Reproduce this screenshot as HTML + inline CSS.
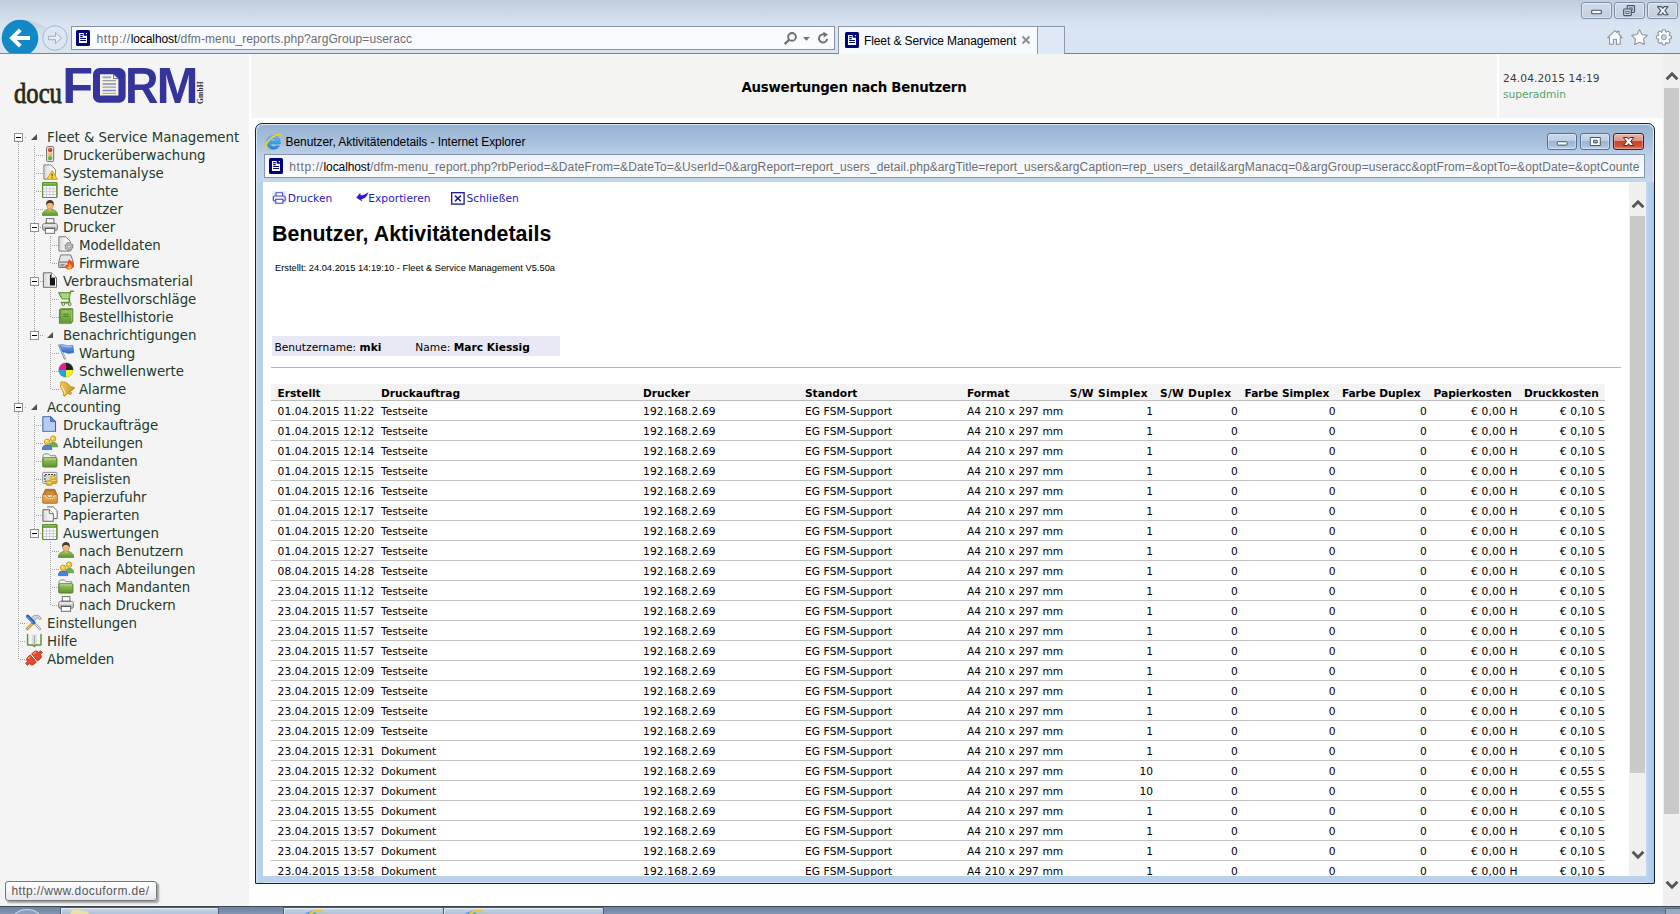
<!DOCTYPE html>
<html lang="de">
<head>
<meta charset="utf-8">
<title>Fleet &amp; Service Management</title>
<style>
html,body{margin:0;padding:0;}
body{width:1680px;height:914px;overflow:hidden;position:relative;background:#fff;font-family:"DejaVu Sans","Liberation Sans",sans-serif;}
.abs{position:absolute;}
.ui{font-family:"Liberation Sans","DejaVu Sans",sans-serif;font-size:12px;white-space:nowrap;}
/* ---------- browser chrome ---------- */
#chrome{left:0;top:0;width:1680px;height:53px;background:linear-gradient(#c0cddc 0px,#cad6e4 10px,#d6e2ef 22px,#d9e5f2 30px,#d8e4f1 53px);border-bottom:1px solid #71869c;}
#addr{left:71px;top:26px;width:762px;height:22px;border:1px solid #8795a6;background:#f9fbfe;box-sizing:content-box;}
#tab{left:838px;top:26px;width:198px;height:27px;border:1px solid #8a98aa;border-bottom:none;background:#f6f9fd;}
#newtab{left:1038px;top:26px;width:26px;height:27px;border:1px solid #8a98aa;border-left:none;border-bottom:none;background:#dfe9f6;}
.wbtn{top:2px;width:29px;height:15px;border:1px solid #7f90a6;border-radius:3px;background:linear-gradient(#cfdbe9,#c0cfe1);box-shadow:inset 0 0 0 1px rgba(255,255,255,.45);}
/* ---------- page ---------- */
#left{left:0;top:54px;width:249px;height:852px;background:#f4f4f4;}
#hdr{left:251px;top:54px;width:1246px;height:64px;background:#f4f4f3;}
#right{left:1499px;top:54px;width:164px;height:64px;background:#f4f4f4;}
#vscroll{left:1663px;top:54px;width:17px;height:852px;background:#f0f0f0;}
.tree{font-size:13.33px;color:#223a2c;white-space:nowrap;line-height:18px;}
/* ---------- popup ---------- */
#popup{left:255px;top:123px;width:1398px;height:759px;border:1px solid #16232f;border-radius:7px 7px 1px 1px;background:#b9d1ea;box-shadow:inset 0 0 0 1px #d8e6f5;}
#ptitle{left:1px;top:1px;width:1396px;height:57px;border-radius:6px 6px 0 0;background:linear-gradient(#98b3d2 0px,#a3bcd9 12px,#b7cce5 27px,#bfd3ea 32px,#c4d7ec 57px);}
#paddr{left:264px;top:154px;width:1379px;height:22px;border:1px solid #8496ad;background:linear-gradient(#eef3fa,#fbfcfe);}
#pcontent{left:263px;top:182px;width:1383px;height:694px;background:#fff;overflow:hidden;}
.rep{font-size:10.67px;color:#000;white-space:nowrap;}
.row{position:absolute;left:8px;width:1334px;height:19px;border-bottom:1px solid #c2c2c2;line-height:19px;}
.row span{position:absolute;top:1px;}
.r{text-align:right;}
.lnk{color:#2620c4;letter-spacing:.05px;line-height:14px;}
#h1{font-family:"Liberation Sans",sans-serif;font-weight:700;font-size:21.33px;line-height:26px;color:#000;letter-spacing:.06px;}
#sub{font-family:"Liberation Sans",sans-serif;font-size:9.33px;line-height:12px;color:#000;}
#ubox{background:#e8e9f4;}
.ut{line-height:20px;}
.hrow{position:absolute;left:8px;top:202px;width:1334px;height:17px;line-height:17px;font-weight:700;}
.hrow span{position:absolute;top:1px;letter-spacing:-0.06px;}
.c1{left:6.500px;letter-spacing:.11px}.c2{left:110px}.c3{left:372px;letter-spacing:.13px}.c4{left:534px;letter-spacing:.08px}.c5{left:696px;letter-spacing:.06px}
.c6{right:452px}.c7{right:367.200px}.c8{right:269.500px}.c9{right:178.300px}.c10{right:87.400px;letter-spacing:.15px}.c11{right:0px;letter-spacing:.15px}
.h6{left:798.700px;letter-spacing:.3px !important}.h7{left:889px;letter-spacing:.25px !important}.h8{left:973.600px}.h9{left:1070.900px}.h10{left:1162.600px}.h11{left:1253px}
.tl{position:absolute;height:18px;line-height:20px;letter-spacing:-0.04px;}
.ic{position:absolute;overflow:visible;}
.ex{position:absolute;width:7px;height:7px;border:1px solid #8f8f8f;background:#fff;}
.ex:after{content:"";position:absolute;left:1px;top:3px;width:5px;height:1px;background:#000;}
.tri{position:absolute;width:0;height:0;border-left:6px solid transparent;border-bottom:6px solid #505050;}
.dv{position:absolute;width:1px;background:repeating-linear-gradient(to bottom,#a2a2a2 0 1px,transparent 1px 2px);}
.dh{position:absolute;height:1px;background:repeating-linear-gradient(to right,#a2a2a2 0 1px,transparent 1px 2px);}
#ttl{font-size:13.33px;font-weight:700;letter-spacing:-0.25px;line-height:16px;color:#000;white-space:nowrap;}
.dt{font-size:10.67px;line-height:14px;white-space:nowrap;letter-spacing:.1px;}
#url1{letter-spacing:.1px}
#tabt{letter-spacing:-.1px}
#pfr{left:1390px;top:58px;width:8px;height:701px;background:linear-gradient(to right,#c6daf0 0px,#b6d1eb 2px,#b0cdea 6px,#9fc3e8 8px);}
#pfl{left:0px;top:58px;width:7px;height:701px;background:linear-gradient(to right,#d6e4f4 0px,#bdd3ec 2px,#b4cde9 7px);}
.pbtn{top:133px;width:28px;height:15px;border:1px solid #566f92;border-radius:3px;background:linear-gradient(#c9d9ec 0%,#bccfe6 45%,#9db6d4 50%,#a6bfdc 80%,#c3daf0 100%);box-shadow:inset 0 0 0 1px rgba(255,255,255,.35);}
.pclose{width:29px;border-color:#4d1c16;background:linear-gradient(#ecb7ab 0%,#dd907f 45%,#c9452c 50%,#cc4f36 78%,#e27f68 100%);box-shadow:inset 0 0 0 1px rgba(255,255,255,.3);}
#url2{letter-spacing:.1px}
#ptt{letter-spacing:-.06px}
#pscroll{left:1366px;top:0;width:17px;height:694px;background:#f0f0f0;}
#tip{left:5px;top:881px;width:150px;height:18px;border:1px solid #767676;border-radius:3px;background:linear-gradient(#ffffff,#e6e7f1);box-shadow:2px 2px 2px rgba(0,0,0,.35);color:#575757;line-height:18px;text-indent:5.500px;letter-spacing:.4px}
.tbi{top:0;height:8px;border:1px solid #4d5c72;border-bottom:none;border-radius:2px 2px 0 0;background:linear-gradient(#c9d6e5,#a9bbd2);box-shadow:inset 1px 1px 0 rgba(255,255,255,.55);}
.hp{letter-spacing:.6px}.lh{color:#000;letter-spacing:-.1px}
#logo span{white-space:nowrap;line-height:1;}
.lg-docu{font-family:"Liberation Serif",serif;font-size:29px;color:#2b2b12;transform-origin:0 0;transform:scaleX(.85);-webkit-text-stroke:.8px #2b2b12;}
.lg-F,.lg-O,.lg-R,.lg-M{font-family:"Liberation Sans",sans-serif;font-weight:700;font-size:50.500px;color:#34349b;transform-origin:0 0;}
.lg-F{transform:scaleX(1)}.lg-O{font-size:44px !important;transform:scaleX(.82)}.lg-R{transform:scaleX(.92)}.lg-M{transform:scaleX(1)}
.lg-gmbh{font-family:"Liberation Serif",serif;font-weight:700;font-size:7.500px;color:#2a2a2a;transform-origin:0 0;transform:rotate(-90deg);letter-spacing:.2px}
#taskbar{left:0;top:906px;width:1680px;height:8px;background:#7a8fac;border-top:1px solid #3c4756;box-sizing:border-box;overflow:hidden;}
</style>
</head>
<body>
<svg width="0" height="0" style="position:absolute">
<defs>
<g id="i-iepage">
 <rect x="0" y="0" width="14" height="16" rx="1.600" fill="#04047a"/>
 <path d="M3 3 H7.700 V5.700 H11 V13 H3 Z" fill="#fff"/>
 <path d="M9.500 3 H11 V4.800 Z" fill="#fff"/>
 <path d="M4.200 4.600 H6.800 M4.200 6.600 H6.800 M4.200 8.500 H10 M4.200 10.500 H10" stroke="#04047a" stroke-width="1.100"/>
</g>
<linearGradient id="gGreen" x1="0" y1="0" x2="0" y2="1"><stop offset="0" stop-color="#9ccb5c"/><stop offset="1" stop-color="#5f9230"/></linearGradient>
<linearGradient id="gGreenH" x1="0" y1="0" x2="1" y2="0"><stop offset="0" stop-color="#6b9a34"/><stop offset=".5" stop-color="#93c455"/><stop offset="1" stop-color="#679530"/></linearGradient>
<linearGradient id="gGray" x1="0" y1="0" x2="0" y2="1"><stop offset="0" stop-color="#efefef"/><stop offset="1" stop-color="#a9a9a9"/></linearGradient>
<linearGradient id="gPage" x1="0" y1="0" x2="1" y2="0"><stop offset="0" stop-color="#d9d9dc"/><stop offset=".6" stop-color="#f4f4f6"/><stop offset="1" stop-color="#ffffff"/></linearGradient>
<linearGradient id="gBlue" x1="0" y1="0" x2="0" y2="1"><stop offset="0" stop-color="#7fb0ee"/><stop offset="1" stop-color="#2f63c0"/></linearGradient>
<linearGradient id="gGold" x1="0" y1="0" x2="1" y2="1"><stop offset="0" stop-color="#f6e07a"/><stop offset="1" stop-color="#c8901c"/></linearGradient>
<linearGradient id="gOr" x1="0" y1="0" x2="0" y2="1"><stop offset="0" stop-color="#f0b865"/><stop offset="1" stop-color="#d08a32"/></linearGradient>
<g id="i-traffic">
 <rect x="4.5" y=".5" width="7.2" height="15" rx="1.2" fill="#dcdcdc" stroke="#777" stroke-width="1"/>
 <circle cx="8.1" cy="4" r="2.1" fill="#d8242c"/><circle cx="7.7" cy="3.4" r=".7" fill="#f08a8a"/>
 <circle cx="8.1" cy="8.1" r="1.9" fill="#f3c030"/><circle cx="7.8" cy="7.6" r=".6" fill="#fbe89a"/>
 <circle cx="8.1" cy="12.1" r="2.1" fill="#5da62c"/><circle cx="7.7" cy="11.5" r=".7" fill="#a8dc7a"/>
</g>
<g id="i-pagewarn">
 <path d="M1.9 .9 H8.8 L13.4 5.4 V15.1 H1.9 Z" fill="url(#gPage)" stroke="#848484" stroke-width="1" stroke-linejoin="round"/>
 <path d="M10 6.6 L15.3 15.2 H4.9 Z" fill="#f9d648" stroke="#d9a21c" stroke-width="1" stroke-linejoin="round"/>
 <path d="M10.1 9.6 V12.4 M10.1 13.3 V14.3" stroke="#6b4a08" stroke-width="1.2"/>
</g>
<g id="i-table">
 <rect x=".6" y=".6" width="14.3" height="14.9" rx="1" fill="#fff" stroke="#5f8f2f" stroke-width="1.1"/>
 <rect x=".6" y=".6" width="14.3" height="3.4" fill="#74ab3d"/>
 <path d="M1.3 1.5 H14.2" stroke="#a4d26c" stroke-width=".9"/>
 <path d="M4.4 4.2 V15 M7.8 4.2 V15 M11.2 4.2 V15 M1.2 6.9 H14.3 M1.2 9.7 H14.3 M1.2 12.5 H14.3" stroke="#c9cadb" stroke-width="1"/>
 <rect x=".6" y=".6" width="14.3" height="14.9" rx="1" fill="none" stroke="#5f8f2f" stroke-width="1.1"/>
</g>
<g id="i-user">
 <path d="M.4 15.4 C.2 11.6 3.4 9.3 8 9.3 C12.6 9.3 15.8 11.6 15.6 15.4 Z" fill="url(#gGreen)" stroke="#5a8a2c" stroke-width=".8"/>
 <path d="M6 9.4 L8 11.2 L10 9.4 L9.4 8 H6.6 Z" fill="#e8b070"/>
 <ellipse cx="8" cy="5.6" rx="3.3" ry="3.7" fill="#f2bb7c" stroke="#b98548" stroke-width=".6"/>
 <path d="M4.1 5.4 C3.6 1.2 6.4 .1 8 .1 C9.6 .1 12.4 1.2 11.9 5.4 C11 3.6 9.6 3 8 3 C6.4 3 5 3.600 4.1 5.400 Z" fill="#4b3a30"/>
</g>
<g id="i-printer">
 <rect x="4.3" y=".6" width="7.6" height="5.2" fill="#fff" stroke="#6f6f6f" stroke-width="1"/>
 <path d="M3 4.600 H13 V6 H3 Z" fill="#5a5a5a"/>
 <rect x=".6" y="5.700" width="14.8" height="6.600" rx="1.6" fill="url(#gGray)" stroke="#7a7a7a" stroke-width="1"/>
 <path d="M1.4 7 H14.600" stroke="#fff" stroke-width=".9" opacity=".8"/>
 <rect x="3.400" y="10.400" width="9.200" height="4.900" fill="#fff" stroke="#6f6f6f" stroke-width="1"/>
 <path d="M3 10.300 H13" stroke="#555" stroke-width="1.1"/>
</g>
<g id="i-pagegear">
 <path d="M.9 .7 H7.600 L12.300 5.200 V15.100 H.9 Z" fill="url(#gPage)" stroke="#7c7c7c" stroke-width="1" stroke-linejoin="round"/>
 <circle cx="11" cy="10.600" r="3.700" fill="#c9c9c9" stroke="#8a8a8a" stroke-width="1.700" stroke-dasharray="1.900 1"/>
 <circle cx="11" cy="10.600" r="3.100" fill="#c4c4c4" stroke="#9a9a9a" stroke-width=".7"/>
 <circle cx="11" cy="10.600" r="1.400" fill="#f6f6f6" stroke="#8a8a8a" stroke-width=".8"/>
</g>
<g id="i-drivefire">
 <path d="M2.800 .9 H12.800 L15.300 8.200 H.6 Z" fill="#e6e6e6" stroke="#777" stroke-width="1" stroke-linejoin="round"/>
 <rect x=".6" y="8.200" width="14.700" height="5.300" rx=".8" fill="url(#gGray)" stroke="#777" stroke-width="1"/>
 <path d="M2.600 10.900 H6.400" stroke="#888" stroke-width="1.400"/>
 <path d="M11.200 5.300 C12.600 7.200 14.600 7.400 15.300 9.600 C16.600 12.600 14.300 15.600 11.200 15.500 C8 15.600 6.600 12.700 8.300 10.200 C8.800 11.300 9.400 11.400 9.700 11.100 C9.100 9 10 6.800 11.200 5.300 Z" fill="#ee4a1c"/>
 <path d="M11.300 9 C12.400 10.400 13.800 11.200 13.600 13 C13.400 14.600 12.300 15.100 11.200 15.100 C9.900 15.100 8.900 14.200 9.300 12.600 C9.900 13.200 10.500 13 10.700 12.600 C10.500 11.300 10.800 10 11.300 9 Z" fill="#fbb22c"/>
</g>
<g id="i-toner">
 <path d="M1.400 .8 H9.400 L14.500 5.700 V15.300 H1.400 Z" fill="url(#gPage)" stroke="#6d6d6d" stroke-width="1" stroke-linejoin="round"/>
 <path d="M7.900 2.800 H9 L9 5.900 H13 V13.600 H7.900 Z" fill="#151515"/>
 <path d="M9.400 .8 V5.700 H14.500" fill="#fff" stroke="#6d6d6d" stroke-width=".9" stroke-linejoin="round"/>
</g>
<g id="i-cart">
 <path d="M.6 2.700 H12.300 L11.400 8.900 H3.900 Z" fill="#84b84c" stroke="#5b8a2e" stroke-width="1" stroke-linejoin="round"/>
 <path d="M2 4.300 H11.800 M2.800 5.900 H11.600 M3.500 7.500 H11.300 M4.500 3 L5.500 8.700 M7 3 L7.400 8.700 M9.500 3 L9.300 8.700" stroke="#cfe8ae" stroke-width=".6"/>
 <path d="M12.100 3 L13 1.200 H15.400" fill="none" stroke="#5b8a2e" stroke-width="1.500" stroke-linecap="round"/>
 <path d="M11.400 8.900 V12.600 H3.300" fill="none" stroke="#5b8a2e" stroke-width="1.600" stroke-linecap="round"/>
 <circle cx="5.300" cy="14" r="1.500" fill="#dcecc6" stroke="#5b8a2e" stroke-width="1"/>
 <circle cx="11.600" cy="14" r="1.500" fill="#dcecc6" stroke="#5b8a2e" stroke-width="1"/>
</g>
<g id="i-book">
 <path d="M2.600 .7 H14.800 V13.300 L13.300 15.300 H1.400 V2 Z" fill="#5f9230" stroke="#4f7d26" stroke-width=".8" stroke-linejoin="round"/>
 <rect x="2.300" y="2.300" width="10.600" height="12.400" fill="url(#gGreenH)"/>
 <rect x="3.300" y="2.300" width="9.600" height="12.400" fill="url(#gGreen)" opacity=".85"/>
 <path d="M5.200 6.200 H10.600 M5.200 8.300 H10.600" stroke="#4f7d26" stroke-width="1"/>
 <path d="M13.700 1.600 V13.400" stroke="#b4dc80" stroke-width=".8"/>
</g>
<g id="i-flag">
 <path d="M1.300 1.300 L6.800 14.600" stroke="#7b8ba4" stroke-width="2.200" stroke-linecap="round"/>
 <path d="M1.700 1.700 L6.800 14.300" stroke="#dfe6f1" stroke-width=".8" stroke-linecap="round"/>
 <path d="M2 1.200 C5 -.4 7.400 1.900 10 1.900 C12 1.900 13.600 1.300 14.800 1.500 L15.700 8.800 C13.600 8.400 12.500 9.500 10.500 9.300 C8 9.100 6.900 7.600 4.700 8.100 Z" fill="url(#gBlue)" stroke="#3868bd" stroke-width=".7" stroke-linejoin="round"/>
 <path d="M3.100 1.900 C5.400 .9 7.400 2.900 10 2.900 C11.600 2.900 13 2.400 14.100 2.400" fill="none" stroke="#b8d4f8" stroke-width=".9"/>
</g>
<g id="i-cmyk">
 <path d="M8 8 V.7 A7.300 7.300 0 0 0 .7 8 Z" fill="#e91f8f"/>
 <path d="M8 8 H15.300 A7.300 7.300 0 0 0 8 .7 Z" fill="#242424"/>
 <path d="M8 8 H.7 A7.300 7.300 0 0 0 8 15.300 Z" fill="#1ea3e4"/>
 <path d="M8 8 V15.300 A7.300 7.300 0 0 0 15.300 8 Z" fill="#f9f11c"/>
 <circle cx="8" cy="8" r="7.300" fill="none" stroke="#555" stroke-opacity=".35" stroke-width=".7"/>
</g>
<g id="i-bell">
 <g transform="rotate(-38 8 8)">
  <path d="M8 .2 C9 .2 9.500 .9 9.300 1.700 C11.600 2.500 12.200 4.900 12.400 7.800 C12.600 10.400 13.600 11.400 14.700 12.400 V13.400 H1.300 V12.400 C2.400 11.400 3.400 10.400 3.600 7.800 C3.800 4.900 4.400 2.500 6.700 1.700 C6.500 .9 7 .2 8 .2 Z" fill="url(#gGold)" stroke="#b98a1a" stroke-width=".8" stroke-linejoin="round"/>
  <path d="M5.400 4.200 C5 6.400 5.300 9.400 3.800 11.800" fill="none" stroke="#fdf0a8" stroke-width="1.100" stroke-linecap="round"/>
  <circle cx="8" cy="14.500" r="1.500" fill="#e8b638" stroke="#b98a1a" stroke-width=".7"/>
 </g>
</g>
<g id="i-pageblue">
 <path d="M.9 .8 H8.600 L13.500 5.600 V15.300 H.9 Z" fill="#c3d8f6" stroke="#3b5ea6" stroke-width="1.100" stroke-linejoin="round"/>
 <path d="M1.800 1.700 H8 V6.300 H12.600 V14.400 H1.800 Z" fill="#b4cef3"/>
 <path d="M8.600 .8 V5.600 H13.500 Z" fill="#5e86cf" stroke="#3b5ea6" stroke-width=".8" stroke-linejoin="round"/>
</g>
<g id="i-group">
 <path d="M7.400 12.800 C7.300 9.500 9 8.400 11.200 8.400 C13.400 8.400 15.700 9.500 15.600 12.800 Z" fill="#79ad44" stroke="#588a2c" stroke-width=".7"/>
 <circle cx="11.100" cy="4.700" r="2.700" fill="#f7cf3c" stroke="#c58e12" stroke-width=".9"/>
 <circle cx="10.400" cy="3.900" r="1" fill="#fdeea0"/>
 <path d="M.4 15.600 C.2 12.300 2 11.100 5.100 11.100 C8.200 11.100 10 12.300 9.800 15.600 Z" fill="#4b83d6" stroke="#2f5fb0" stroke-width=".7"/>
 <circle cx="5.100" cy="7.800" r="2.700" fill="#f7cf3c" stroke="#c58e12" stroke-width=".9"/>
 <circle cx="4.400" cy="6.800" r="1" fill="#fdeea0"/>
</g>
<g id="i-folder">
 <path d="M.9 14.600 V3.600 L2.400 1.900 H6.600 L8.200 3.700 H13.800 V6 H.9" fill="#f1f1f1" stroke="#8d8d8d" stroke-width="1" stroke-linejoin="round"/>
 <rect x=".9" y="5.900" width="14" height="9.100" rx=".8" fill="url(#gGreen)" stroke="#567f2c" stroke-width="1"/>
 <path d="M1.800 6.900 H14" stroke="#c3e39a" stroke-width=".9"/>
</g>
<g id="i-money">
 <rect x=".7" y="2.400" width="14.200" height="11" rx=".8" fill="#f3f3f3" stroke="#8a8a8a" stroke-width="1"/>
 <rect x="2.900" y="4.500" width="9.900" height="6.800" fill="#d9d9dc" stroke="#3c3c3c" stroke-width="1.100" stroke-dasharray="2 1.100"/>
 <ellipse cx="11.500" cy="11.800" rx="3.100" ry="1.500" fill="#e8b72e" stroke="#b98a1a" stroke-width=".7"/>
 <ellipse cx="11.500" cy="10.300" rx="3.100" ry="1.500" fill="#f5d55a" stroke="#b98a1a" stroke-width=".7"/>
 <ellipse cx="10.700" cy="7.600" rx="3.100" ry="1.500" fill="#f5d55a" stroke="#b98a1a" stroke-width=".7"/>
 <ellipse cx="7.200" cy="14" rx="3.300" ry="1.600" fill="#e8b72e" stroke="#b98a1a" stroke-width=".7"/>
 <ellipse cx="7.200" cy="12.500" rx="3.300" ry="1.600" fill="#f7dc66" stroke="#b98a1a" stroke-width=".7"/>
</g>
<g id="i-inbox">
 <path d="M3.400 1.300 H12.700 L15 6.800 H1 Z" fill="#b9772d" stroke="#a5641f" stroke-width=".8" stroke-linejoin="round"/>
 <path d="M4.400 3.400 H11.700 L13 6.800 H3 Z" fill="#cf8e3f"/>
 <path d="M.7 6.800 H4.600 L6 9.300 H10.100 L11.500 6.800 H15.400 V14.300 C15.400 14.900 15 15.300 14.400 15.300 H1.700 C1.100 15.300 .7 14.900 .7 14.300 Z" fill="url(#gOr)" stroke="#b36f22" stroke-width=".9" stroke-linejoin="round"/>
 <path d="M1.600 7.800 H4.100 L5.500 10.300 H10.600 L12 7.800 H14.500" fill="none" stroke="#f9dca4" stroke-width=".8"/>
</g>
<g id="i-pages">
 <path d="M5 .9 H11.200 L15.200 4.800 V12.600 H11.500" fill="#fff" stroke="#666" stroke-width="1" stroke-linejoin="round"/>
 <path d="M.9 3.700 H7.300 L11.300 7.600 V15.300 H.9 Z" fill="url(#gPage)" stroke="#666" stroke-width="1" stroke-linejoin="round"/>
 <path d="M7.300 3.700 V7.600 H11.300" fill="#fff" stroke="#666" stroke-width=".9" stroke-linejoin="round"/>
</g>
<g id="i-tools">
 <path d="M5.200 4.800 C6 2.200 9 .8 11.600 1.400 C13.300 1.800 14.600 3 15.400 4.800 L13.300 5.600 C12.900 4.600 12 3.900 10.800 3.800 L8.600 6.600 Z" fill="#d6d6d6" stroke="#8c8c8c" stroke-width=".8" stroke-linejoin="round"/>
 <path d="M1.300 14.800 L6.800 9.300" stroke="#b9892e" stroke-width="2.800" stroke-linecap="round"/>
 <path d="M1.500 14.400 L6.600 9.300" stroke="#f1d27e" stroke-width="1.100" stroke-linecap="round"/>
 <path d="M8.200 9.200 L13.900 14.900" stroke="#9a9a9a" stroke-width="2.200" stroke-linecap="round"/>
 <path d="M8.300 9.300 L13.700 14.700" stroke="#fafafa" stroke-width="1" stroke-linecap="round"/>
 <path d="M1.600 2.200 L7.800 8.600" stroke="#2c62c6" stroke-width="3.400" stroke-linecap="round"/>
 <path d="M1.300 2.900 L6.800 8.600" stroke="#7fb0f2" stroke-width="1" stroke-linecap="round"/>
</g>
<g id="i-help">
 <path d="M2.400 2.300 H7.300 L8.300 3.200 L9.300 2.300 H14 V12.600 H9.300 L8.300 13.400 L7.300 12.600 H2.400 Z" fill="#f6f6f6"/>
 <path d="M8.300 3.200 V13.200" stroke="#a9a9a9" stroke-width="1.600"/>
 <path d="M5.600 2.300 H7.400 V12.600 H5.600 Z M9.200 2.300 H10.800 V12.600 H9.200 Z" fill="#dedede"/>
 <path d="M1.600 2.600 V13.100 H6.800 L8.300 14.500 L9.800 13.100 H15 V2.600" fill="none" stroke="#6a9332" stroke-width="1.500" stroke-linejoin="round" stroke-linecap="round"/>
</g>
<g id="i-logout">
 <g transform="rotate(-40 8 8)">
  <path d="M-1.800 6.700 H.8 V6.400 C.8 4.400 2.300 3.300 4.200 3.300 H7.100 V12.700 H4.200 C2.300 12.700 .8 11.600 .8 9.600 V9.300 H-1.800 Z" fill="#e5492d" stroke="#b52b16" stroke-width=".8" stroke-linejoin="round"/>
  <path d="M17.800 6.700 H15.200 V6.400 C15.200 4.400 13.700 3.300 11.800 3.300 H8.900 V12.700 H11.800 C13.700 12.700 15.200 11.600 15.200 9.600 V9.300 H17.800 Z" fill="#e5492d" stroke="#b52b16" stroke-width=".8" stroke-linejoin="round"/>
  <path d="M2.600 4.700 H6 M10 4.700 H13.400" stroke="#f6a58f" stroke-width="1.100"/>
 </g>
</g>

</defs>
</svg>
<!-- browser chrome -->
<div id="chrome" class="abs"></div>
<!-- back / forward -->
<svg class="abs" style="left:0;top:17px" width="72" height="36" viewBox="0 17 72 36">
 <defs><linearGradient id="swg" x1="0" y1="0" x2="0" y2="1"><stop offset="0" stop-color="#bfc8d2"/><stop offset="1" stop-color="#d5dfeb" stop-opacity="0"/></linearGradient></defs><path d="M24 19.8 C34 21 41 25 48 28 L45 40 L30 40 Z" fill="url(#swg)"/>
 <circle cx="20" cy="38" r="18.3" fill="#1288c6"/>
 <path d="M30 38 H12.500 M20.300 29.800 L12 38 L20.300 46.200" fill="none" stroke="#fff" stroke-width="3.900" stroke-linecap="butt" stroke-linejoin="miter"/>
 <circle cx="55" cy="38" r="12.3" fill="#dce6f2" stroke="#a9b5c3" stroke-width="1"/>
 <path d="M48.5 36.3 H55.5 V32.5 L61.5 38 L55.5 43.5 V39.7 H48.5 Z" fill="#e6edf6" stroke="#a3afbd" stroke-width="1" stroke-linejoin="miter"/>
</svg>
<div id="addr" class="abs"></div>
<svg class="abs" style="left:76px;top:30px" width="14" height="16" viewBox="0 0 14 16"><use href="#i-iepage"/></svg>
<div class="abs ui" id="url1" style="left:96.5px;top:32px;line-height:15px;color:#6e6e6e"><span class="hp">http://</span><span class="lh">localhost</span>/dfm-menu_reports.php?argGroup=useracc</div>
<svg class="abs" style="left:783px;top:30px" width="50" height="16" viewBox="0 0 50 16">
 <circle cx="9" cy="6.900" r="3.850" fill="none" stroke="#6f6f6f" stroke-width="1.900"/>
 <path d="M6.100 9.800 L1.700 14.100" stroke="#6f6f6f" stroke-width="2.300" stroke-linecap="butt"/>
 <path d="M20.100 7.100 h6.700 l-3.350 3.700z" fill="#6f6f6f"/>
 <path d="M42.02 4.78 A4.1 4.1 0 1 0 44.16 8.97" fill="none" stroke="#6f6f6f" stroke-width="1.900"/>
 <path d="M40.300 1.700 L45 4.600 L40.800 7.600 Z" fill="#6f6f6f"/>
</svg>
<div id="tab" class="abs"></div>
<div id="newtab" class="abs"></div>
<svg class="abs" style="left:845px;top:32px" width="14" height="16" viewBox="0 0 14 16"><use href="#i-iepage"/></svg>
<div class="abs ui" id="tabt" style="left:864px;top:34px;line-height:15px;color:#000">Fleet &amp; Service Management</div>
<svg class="abs" style="left:1021px;top:35px" width="10" height="10" viewBox="0 0 10 10"><path d="M1.5 1.5 L8.5 8.5 M8.5 1.5 L1.5 8.5" stroke="#8e8e8e" stroke-width="2"/></svg>
<!-- window buttons -->
<div class="abs wbtn" style="left:1581px"></div>
<div class="abs wbtn" style="left:1614px"></div>
<div class="abs wbtn" style="left:1647px"></div>
<svg class="abs" style="left:1581px;top:2px" width="98" height="17" viewBox="0 0 98 17">
 <rect x="10.7" y="8.2" width="9.6" height="3.6" rx=".8" fill="#f4f7fb" stroke="#4b5563" stroke-width="1.1"/>
 <rect x="46.2" y="3.7" width="7.3" height="6.6" rx=".8" fill="#d3deeb" stroke="#4b5563" stroke-width="1.2"/>
 <rect x="48.6" y="5.9" width="2.6" height="2.2" fill="#f4f7fb" stroke="#4b5563" stroke-width=".9"/>
 <rect x="42.7" y="7" width="7.6" height="6.6" rx=".8" fill="#d3deeb" stroke="#4b5563" stroke-width="1.2"/>
 <rect x="44.9" y="9.3" width="3.2" height="2.2" fill="#f4f7fb" stroke="#4b5563" stroke-width=".9"/>
 <path d="M76.6 4.6 h3.9 l1.3 1.9 l1.3 -1.9 h3.9 l-3.1 4.1 l3.1 4.1 h-3.9 l-1.3 -1.9 l-1.3 1.9 h-3.9 l3.1 -4.1 z" fill="#f4f7fb" stroke="#4b5563" stroke-width="1.1" stroke-linejoin="round"/>
</svg>
<!-- home / star / gear -->
<svg class="abs" style="left:1605px;top:28px" width="70" height="18" viewBox="0 0 70 18">
 <path d="M2.6 9.6 L9.9 2.6 L12.2 4.8 V3.4 H14 V6.5 L17.2 9.6 H15.2 V16.2 H11.5 V11.2 H8.4 V16.2 H4.6 V9.6 Z" fill="#fff" stroke="#8b97a5" stroke-width="1.1" stroke-linejoin="round"/>
 <path d="M34.50 1.70 L37.03 6.42 L42.30 7.37 L38.59 11.23 L39.32 16.53 L34.50 14.20 L29.68 16.53 L30.41 11.23 L26.70 7.37 L31.97 6.42Z" fill="#fff" stroke="#8b97a5" stroke-width="1.1" stroke-linejoin="round"/>
 <g transform="translate(58.9 9.3)">
  <path d="M-2.04 -5.21 L-1.25 -7.50 L1.25 -7.50 L2.04 -5.21 L2.24 -5.13 L4.42 -6.18 L6.18 -4.42 L5.13 -2.24 L5.21 -2.04 L7.50 -1.25 L7.50 1.25 L5.21 2.04 L5.13 2.24 L6.18 4.42 L4.42 6.18 L2.24 5.13 L2.04 5.21 L1.25 7.50 L-1.25 7.50 L-2.04 5.21 L-2.24 5.13 L-4.42 6.18 L-6.18 4.42 L-5.13 2.24 L-5.21 2.04 L-7.50 1.25 L-7.50 -1.25 L-5.21 -2.04 L-5.13 -2.24 L-6.18 -4.42 L-4.42 -6.18 L-2.24 -5.13Z" fill="#fff" stroke="#8b97a5" stroke-width="1.1" stroke-linejoin="round"/>
  <circle r="2.5" fill="#d0d5dc" stroke="#8b97a5" stroke-width="1"/>
 </g>
</svg>
<!-- page -->
<div id="left" class="abs tree">
<div class="abs" id="logo" style="left:0;top:0;width:249px;height:64px">
<span class="abs lg-docu" style="left:13.800px;top:24.900px">docu</span>
<span class="abs lg-F" style="left:62.200px;top:7.200px">F</span>
<span class="abs lg-O" style="left:94.500px;top:10px">O</span>
<span class="abs lg-R" style="left:124.600px;top:7.200px">R</span>
<span class="abs lg-M" style="left:156.500px;top:7.200px">M</span>
<svg class="abs" style="left:92px;top:13px" width="35" height="37" viewBox="0 0 35 37">
 <rect x="1" y="1" width="32.600" height="34.700" rx="6.500" fill="#34349b"/>
 <path d="M8 7.200 H21.600 L26.400 11.600 V28.500 H8 Z" fill="#f6f4de"/>
 <path d="M21.600 7.200 V11.600 H26.400 Z" fill="#fff" stroke="#34349b" stroke-width=".7"/>
 <path d="M10.500 10.300 H19" stroke="#8f9bd8" stroke-width="1.700"/>
 <path d="M10.500 13.600 H24 M10.500 20.200 H24" stroke="#9a9aa6" stroke-width="1.300"/>
 <path d="M10.500 16.900 H24 M10.500 23.500 H24" stroke="#7f86d2" stroke-width="1.500"/>
 <path d="M10.500 26.400 H24" stroke="#a5a595" stroke-width="1.100"/>
</svg>
<span class="abs lg-gmbh" style="left:196.800px;top:49.600px">GmbH</span>
</div>
<i class="dv" style="left:18px;top:88px;height:518px"></i>
<i class="dh" style="left:20px;top:569px;width:6px"></i>
<i class="dh" style="left:20px;top:587px;width:6px"></i>
<i class="dh" style="left:20px;top:605px;width:6px"></i>
<i class="dh" style="left:25px;top:83px;width:2px"></i>
<i class="dh" style="left:25px;top:353px;width:2px"></i>
<i class="dv" style="left:34px;top:92px;height:190px"></i>
<i class="dh" style="left:36px;top:101px;width:7px"></i>
<i class="dh" style="left:36px;top:119px;width:7px"></i>
<i class="dh" style="left:36px;top:137px;width:7px"></i>
<i class="dh" style="left:36px;top:155px;width:7px"></i>
<i class="dh" style="left:40px;top:173px;width:3px"></i>
<i class="dh" style="left:40px;top:227px;width:3px"></i>
<i class="dh" style="left:40px;top:281px;width:3px"></i>
<i class="dv" style="left:50px;top:182px;height:28px"></i>
<i class="dh" style="left:52px;top:191px;width:7px"></i>
<i class="dh" style="left:52px;top:209px;width:7px"></i>
<i class="dv" style="left:50px;top:236px;height:28px"></i>
<i class="dh" style="left:52px;top:245px;width:7px"></i>
<i class="dh" style="left:52px;top:263px;width:7px"></i>
<i class="dv" style="left:50px;top:290px;height:46px"></i>
<i class="dh" style="left:52px;top:299px;width:7px"></i>
<i class="dh" style="left:52px;top:317px;width:7px"></i>
<i class="dh" style="left:52px;top:335px;width:7px"></i>
<i class="dv" style="left:34px;top:362px;height:118px"></i>
<i class="dh" style="left:36px;top:371px;width:7px"></i>
<i class="dh" style="left:36px;top:389px;width:7px"></i>
<i class="dh" style="left:36px;top:407px;width:7px"></i>
<i class="dh" style="left:36px;top:425px;width:7px"></i>
<i class="dh" style="left:36px;top:443px;width:7px"></i>
<i class="dh" style="left:36px;top:461px;width:7px"></i>
<i class="dh" style="left:40px;top:479px;width:3px"></i>
<i class="dv" style="left:50px;top:488px;height:64px"></i>
<i class="dh" style="left:52px;top:497px;width:7px"></i>
<i class="dh" style="left:52px;top:515px;width:7px"></i>
<i class="dh" style="left:52px;top:533px;width:7px"></i>
<i class="dh" style="left:52px;top:551px;width:7px"></i>
<div class="tl" style="left:47px;top:74px">Fleet &amp; Service Management</div>
<i class="ex" style="left:14px;top:79px"></i>
<i class="tri" style="left:31px;top:80px"></i>
<div class="tl" style="left:63px;top:92px">Druckerüberwachung</div>
<svg class="ic" style="left:42px;top:92px" width="16" height="16" viewBox="0 0 16 16"><use href="#i-traffic"/></svg>
<div class="tl" style="left:63px;top:110px">Systemanalyse</div>
<svg class="ic" style="left:42px;top:110px" width="16" height="16" viewBox="0 0 16 16"><use href="#i-pagewarn"/></svg>
<div class="tl" style="left:63px;top:128px">Berichte</div>
<svg class="ic" style="left:42px;top:128px" width="16" height="16" viewBox="0 0 16 16"><use href="#i-table"/></svg>
<div class="tl" style="left:63px;top:146px">Benutzer</div>
<svg class="ic" style="left:42px;top:146px" width="16" height="16" viewBox="0 0 16 16"><use href="#i-user"/></svg>
<div class="tl" style="left:63px;top:164px">Drucker</div>
<i class="ex" style="left:30px;top:169px"></i>
<svg class="ic" style="left:42px;top:164px" width="16" height="16" viewBox="0 0 16 16"><use href="#i-printer"/></svg>
<div class="tl" style="left:79px;top:182px">Modelldaten</div>
<svg class="ic" style="left:58px;top:182px" width="16" height="16" viewBox="0 0 16 16"><use href="#i-pagegear"/></svg>
<div class="tl" style="left:79px;top:200px">Firmware</div>
<svg class="ic" style="left:58px;top:200px" width="16" height="16" viewBox="0 0 16 16"><use href="#i-drivefire"/></svg>
<div class="tl" style="left:63px;top:218px">Verbrauchsmaterial</div>
<i class="ex" style="left:30px;top:223px"></i>
<svg class="ic" style="left:42px;top:218px" width="16" height="16" viewBox="0 0 16 16"><use href="#i-toner"/></svg>
<div class="tl" style="left:79px;top:236px">Bestellvorschläge</div>
<svg class="ic" style="left:58px;top:236px" width="16" height="16" viewBox="0 0 16 16"><use href="#i-cart"/></svg>
<div class="tl" style="left:79px;top:254px">Bestellhistorie</div>
<svg class="ic" style="left:58px;top:254px" width="16" height="16" viewBox="0 0 16 16"><use href="#i-book"/></svg>
<div class="tl" style="left:63px;top:272px">Benachrichtigungen</div>
<i class="ex" style="left:30px;top:277px"></i>
<i class="tri" style="left:47px;top:278px"></i>
<div class="tl" style="left:79px;top:290px">Wartung</div>
<svg class="ic" style="left:58px;top:290px" width="16" height="16" viewBox="0 0 16 16"><use href="#i-flag"/></svg>
<div class="tl" style="left:79px;top:308px">Schwellenwerte</div>
<svg class="ic" style="left:58px;top:308px" width="16" height="16" viewBox="0 0 16 16"><use href="#i-cmyk"/></svg>
<div class="tl" style="left:79px;top:326px">Alarme</div>
<svg class="ic" style="left:58px;top:326px" width="16" height="16" viewBox="0 0 16 16"><use href="#i-bell"/></svg>
<div class="tl" style="left:47px;top:344px">Accounting</div>
<i class="ex" style="left:14px;top:349px"></i>
<i class="tri" style="left:31px;top:350px"></i>
<div class="tl" style="left:63px;top:362px">Druckaufträge</div>
<svg class="ic" style="left:42px;top:362px" width="16" height="16" viewBox="0 0 16 16"><use href="#i-pageblue"/></svg>
<div class="tl" style="left:63px;top:380px">Abteilungen</div>
<svg class="ic" style="left:42px;top:380px" width="16" height="16" viewBox="0 0 16 16"><use href="#i-group"/></svg>
<div class="tl" style="left:63px;top:398px">Mandanten</div>
<svg class="ic" style="left:42px;top:398px" width="16" height="16" viewBox="0 0 16 16"><use href="#i-folder"/></svg>
<div class="tl" style="left:63px;top:416px">Preislisten</div>
<svg class="ic" style="left:42px;top:416px" width="16" height="16" viewBox="0 0 16 16"><use href="#i-money"/></svg>
<div class="tl" style="left:63px;top:434px">Papierzufuhr</div>
<svg class="ic" style="left:42px;top:434px" width="16" height="16" viewBox="0 0 16 16"><use href="#i-inbox"/></svg>
<div class="tl" style="left:63px;top:452px">Papierarten</div>
<svg class="ic" style="left:42px;top:452px" width="16" height="16" viewBox="0 0 16 16"><use href="#i-pages"/></svg>
<div class="tl" style="left:63px;top:470px">Auswertungen</div>
<i class="ex" style="left:30px;top:475px"></i>
<svg class="ic" style="left:42px;top:470px" width="16" height="16" viewBox="0 0 16 16"><use href="#i-table"/></svg>
<div class="tl" style="left:79px;top:488px">nach Benutzern</div>
<svg class="ic" style="left:58px;top:488px" width="16" height="16" viewBox="0 0 16 16"><use href="#i-user"/></svg>
<div class="tl" style="left:79px;top:506px">nach Abteilungen</div>
<svg class="ic" style="left:58px;top:506px" width="16" height="16" viewBox="0 0 16 16"><use href="#i-group"/></svg>
<div class="tl" style="left:79px;top:524px">nach Mandanten</div>
<svg class="ic" style="left:58px;top:524px" width="16" height="16" viewBox="0 0 16 16"><use href="#i-folder"/></svg>
<div class="tl" style="left:79px;top:542px">nach Druckern</div>
<svg class="ic" style="left:58px;top:542px" width="16" height="16" viewBox="0 0 16 16"><use href="#i-printer"/></svg>
<div class="tl" style="left:47px;top:560px">Einstellungen</div>
<svg class="ic" style="left:26px;top:560px" width="16" height="16" viewBox="0 0 16 16"><use href="#i-tools"/></svg>
<div class="tl" style="left:47px;top:578px">Hilfe</div>
<svg class="ic" style="left:26px;top:578px" width="16" height="16" viewBox="0 0 16 16"><use href="#i-help"/></svg>
<div class="tl" style="left:47px;top:596px">Abmelden</div>
<svg class="ic" style="left:26px;top:596px" width="16" height="16" viewBox="0 0 16 16"><use href="#i-logout"/></svg>
</div>
<div id="hdr" class="abs"><div class="abs" id="ttl" style="left:0;top:25.500px;width:1206px;text-align:center">Auswertungen nach Benutzern</div></div>
<div id="right" class="abs"><div class="abs dt" style="left:4px;top:18px;color:#3c3c3c">24.04.2015 14:19</div><div class="abs dt" style="left:4px;top:34px;color:#55a36b;letter-spacing:-.05px">superadmin</div></div>
<div id="vscroll" class="abs">
 <div class="abs" style="left:1px;top:34px;width:15px;height:726px;background:#c9c9c9"></div>
 <svg class="abs" style="left:1.500px;top:16.600px" width="14" height="10" viewBox="0 0 14 10"><path d="M1.6 8.2 L7 2.8 L12.4 8.2" fill="none" stroke="#555" stroke-width="2.9"/></svg>
 <svg class="abs" style="left:1.500px;top:825.500px" width="14" height="10" viewBox="0 0 14 10"><path d="M1.6 1.800 L7 7.200 L12.4 1.800" fill="none" stroke="#555" stroke-width="2.900"/></svg>
</div>
<!-- popup -->
<div id="popup" class="abs"><div id="ptitle" class="abs"></div><div id="pfr" class="abs"></div><div id="pfl" class="abs"></div></div>
<!-- IE logo -->
<svg class="abs" style="left:263px;top:132px" width="20" height="18" viewBox="0 0 20 18">
 <defs><linearGradient id="ieg" x1="0" y1="0" x2="0" y2="1"><stop offset="0" stop-color="#58c4f6"/><stop offset="1" stop-color="#2384d2"/></linearGradient></defs>
 <path d="M17.300 10.600 A6.900 6.900 0 1 0 16.500 13.700 H12.900 A3.600 3.600 0 0 1 7.100 12.100 H17.200 A8 8 0 0 0 17.300 10.600 Z M7.100 9 A3.500 3.500 0 0 1 13.700 9 Z" fill="url(#ieg)" stroke="#2a86cf" stroke-width=".5"/>
 <path d="M2.600 17.200 C-.6 14 4.800 5.600 13 2.200 C17 .6 19.300 2 17.700 5.600 C17.800 3.400 15.800 3.100 13 4.200 C7 6.800 2.200 13.400 3.800 16.200 C4.300 17 5.500 17 6.800 16.500 C5 17.900 3.400 18 2.600 17.200 Z" fill="#f3d046" stroke="#e0b21e" stroke-width=".3"/>
</svg>
<div class="abs ui" id="ptt" style="left:285.5px;top:135px;line-height:15px;color:#000">Benutzer, Aktivitätendetails - Internet Explorer</div>
<!-- popup window buttons -->
<div class="abs pbtn" style="left:1547px"></div>
<div class="abs pbtn" style="left:1580px"></div>
<div class="abs pbtn pclose" style="left:1613px"></div>
<svg class="abs" style="left:1547px;top:133px" width="98" height="17" viewBox="0 0 98 17">
 <rect x="10.3" y="8.7" width="9.8" height="3.4" rx=".7" fill="#fbfcfe" stroke="#4a5666" stroke-width="1"/>
 <path d="M43.3 4.5 h10 v8 h-10 z M46.6 7.2 v2.7 h3.6 v-2.7 z" fill="#fbfcfe" fill-rule="evenodd" stroke="#4a5666" stroke-width="1" stroke-linejoin="round"/>
 <path d="M76.4 4.5 h3.9 l1.3 1.8 l1.3 -1.8 h3.9 l-3.1 4 l3.1 4 h-3.9 l-1.3 -1.8 l-1.3 1.8 h-3.9 l3.1 -4 z" fill="#fdfdfd" stroke="#5a2018" stroke-width="1" stroke-linejoin="round"/>
</svg>
<div id="paddr" class="abs"></div>
<svg class="abs" style="left:269px;top:158px" width="14" height="16" viewBox="0 0 14 16"><use href="#i-iepage"/></svg>
<div class="abs ui" id="url2" style="left:289.3px;top:160px;width:1351px;overflow:hidden;line-height:15px;color:#6e6e6e"><span class="hp">http://</span><span class="lh">localhost</span>/dfm-menu_report.php?rbPeriod=&amp;DateFrom=&amp;DateTo=&amp;UserId=0&amp;argReport=report_users_detail.php&amp;argTitle=report_users&amp;argCaption=rep_users_detail&amp;argManacq=0&amp;argGroup=useracc&amp;optFrom=&amp;optTo=&amp;optDate=&amp;optCounte</div>
<div id="pcontent" class="abs rep">
<!-- toolbar -->
<svg class="abs" style="left:9px;top:9px" width="15" height="14" viewBox="0 0 15 14">
 <rect x="0" y="0" width="14.500" height="13.500" fill="#ededf5"/>
 <path d="M4 5 V1.700 H10.600 V5" fill="#fff" stroke="#4a4ad0" stroke-width="1.100"/>
 <rect x="1.400" y="5" width="11.800" height="5" rx="1.300" fill="#f4f4ff" stroke="#4a4ad0" stroke-width="1.200"/>
 <rect x="3.700" y="8.300" width="7.200" height="3.900" fill="#fff" stroke="#4a4ad0" stroke-width="1.100"/>
</svg>
<svg class="abs" style="left:92.500px;top:10px" width="13" height="10" viewBox="0 0 13 10">
 <path d="M12.300 .2 C11.300 4.400 8.800 6.700 5.300 7.200 L6.300 9.600 L.3 5.700 L4.200 .8 L4.700 3.300 C7.400 3.300 9.800 2.200 12.300 .2 Z" fill="#2a1ad0"/>
</svg>
<svg class="abs" style="left:187.500px;top:9.500px" width="14" height="13" viewBox="0 0 14 13">
 <rect x=".7" y=".7" width="12.400" height="11.400" fill="#fff" stroke="#1a1a8c" stroke-width="1.300"/>
 <path d="M4 3.600 L9.800 9.200 M9.800 3.600 L4 9.200" stroke="#1a1a8c" stroke-width="1.500"/>
</svg>
<div class="abs lnk" style="left:24.700px;top:10px">Drucken</div>
<div class="abs lnk" style="left:105.200px;top:10px">Exportieren</div>
<div class="abs lnk" style="left:203.5px;top:10px">Schließen</div>
<div class="abs" id="h1" style="left:9px;top:39.400px">Benutzer, Aktivitätendetails</div>
<div class="abs" id="sub" style="left:12px;top:80px">Erstellt: 24.04.2015 14:19:10 - Fleet &amp; Service Management V5.50a</div>
<div class="abs" id="ubox" style="left:9px;top:154px;width:288px;height:20px"></div>
<div class="abs ut" style="left:11.5px;top:155.5px">Benutzername: <b>mki</b></div>
<div class="abs ut" style="left:152.3px;top:155.5px">Name: <b>Marc Kiessig</b></div>
<div class="abs" id="hr" style="left:8px;top:185px;width:1350px;height:1px;background:#b4b4b4"></div>
<!-- table header -->
<div class="abs" id="thead" style="left:8px;top:202px;width:1334px;height:16px;background:#f3f3f3;border-bottom:1px solid #bdbdbd"></div>
<div class="hrow"><span class="c1">Erstellt</span><span class="c2">Druckauftrag</span><span class="c3">Drucker</span><span class="c4">Standort</span><span class="c5">Format</span><span class="h6">S/W Simplex</span><span class="h7">S/W Duplex</span><span class="h8">Farbe Simplex</span><span class="h9">Farbe Duplex</span><span class="h10">Papierkosten</span><span class="h11">Druckkosten</span></div>
<div class="row" style="top:219px"><span class="c1">01.04.2015 11:22</span><span class="c2">Testseite</span><span class="c3">192.168.2.69</span><span class="c4">EG FSM-Support</span><span class="c5">A4 210 x 297 mm</span><span class="r c6">1</span><span class="r c7">0</span><span class="r c8">0</span><span class="r c9">0</span><span class="r c10">€ 0,00 H</span><span class="r c11">€ 0,10 S</span></div>
<div class="row" style="top:239px"><span class="c1">01.04.2015 12:12</span><span class="c2">Testseite</span><span class="c3">192.168.2.69</span><span class="c4">EG FSM-Support</span><span class="c5">A4 210 x 297 mm</span><span class="r c6">1</span><span class="r c7">0</span><span class="r c8">0</span><span class="r c9">0</span><span class="r c10">€ 0,00 H</span><span class="r c11">€ 0,10 S</span></div>
<div class="row" style="top:259px"><span class="c1">01.04.2015 12:14</span><span class="c2">Testseite</span><span class="c3">192.168.2.69</span><span class="c4">EG FSM-Support</span><span class="c5">A4 210 x 297 mm</span><span class="r c6">1</span><span class="r c7">0</span><span class="r c8">0</span><span class="r c9">0</span><span class="r c10">€ 0,00 H</span><span class="r c11">€ 0,10 S</span></div>
<div class="row" style="top:279px"><span class="c1">01.04.2015 12:15</span><span class="c2">Testseite</span><span class="c3">192.168.2.69</span><span class="c4">EG FSM-Support</span><span class="c5">A4 210 x 297 mm</span><span class="r c6">1</span><span class="r c7">0</span><span class="r c8">0</span><span class="r c9">0</span><span class="r c10">€ 0,00 H</span><span class="r c11">€ 0,10 S</span></div>
<div class="row" style="top:299px"><span class="c1">01.04.2015 12:16</span><span class="c2">Testseite</span><span class="c3">192.168.2.69</span><span class="c4">EG FSM-Support</span><span class="c5">A4 210 x 297 mm</span><span class="r c6">1</span><span class="r c7">0</span><span class="r c8">0</span><span class="r c9">0</span><span class="r c10">€ 0,00 H</span><span class="r c11">€ 0,10 S</span></div>
<div class="row" style="top:319px"><span class="c1">01.04.2015 12:17</span><span class="c2">Testseite</span><span class="c3">192.168.2.69</span><span class="c4">EG FSM-Support</span><span class="c5">A4 210 x 297 mm</span><span class="r c6">1</span><span class="r c7">0</span><span class="r c8">0</span><span class="r c9">0</span><span class="r c10">€ 0,00 H</span><span class="r c11">€ 0,10 S</span></div>
<div class="row" style="top:339px"><span class="c1">01.04.2015 12:20</span><span class="c2">Testseite</span><span class="c3">192.168.2.69</span><span class="c4">EG FSM-Support</span><span class="c5">A4 210 x 297 mm</span><span class="r c6">1</span><span class="r c7">0</span><span class="r c8">0</span><span class="r c9">0</span><span class="r c10">€ 0,00 H</span><span class="r c11">€ 0,10 S</span></div>
<div class="row" style="top:359px"><span class="c1">01.04.2015 12:27</span><span class="c2">Testseite</span><span class="c3">192.168.2.69</span><span class="c4">EG FSM-Support</span><span class="c5">A4 210 x 297 mm</span><span class="r c6">1</span><span class="r c7">0</span><span class="r c8">0</span><span class="r c9">0</span><span class="r c10">€ 0,00 H</span><span class="r c11">€ 0,10 S</span></div>
<div class="row" style="top:379px"><span class="c1">08.04.2015 14:28</span><span class="c2">Testseite</span><span class="c3">192.168.2.69</span><span class="c4">EG FSM-Support</span><span class="c5">A4 210 x 297 mm</span><span class="r c6">1</span><span class="r c7">0</span><span class="r c8">0</span><span class="r c9">0</span><span class="r c10">€ 0,00 H</span><span class="r c11">€ 0,10 S</span></div>
<div class="row" style="top:399px"><span class="c1">23.04.2015 11:12</span><span class="c2">Testseite</span><span class="c3">192.168.2.69</span><span class="c4">EG FSM-Support</span><span class="c5">A4 210 x 297 mm</span><span class="r c6">1</span><span class="r c7">0</span><span class="r c8">0</span><span class="r c9">0</span><span class="r c10">€ 0,00 H</span><span class="r c11">€ 0,10 S</span></div>
<div class="row" style="top:419px"><span class="c1">23.04.2015 11:57</span><span class="c2">Testseite</span><span class="c3">192.168.2.69</span><span class="c4">EG FSM-Support</span><span class="c5">A4 210 x 297 mm</span><span class="r c6">1</span><span class="r c7">0</span><span class="r c8">0</span><span class="r c9">0</span><span class="r c10">€ 0,00 H</span><span class="r c11">€ 0,10 S</span></div>
<div class="row" style="top:439px"><span class="c1">23.04.2015 11:57</span><span class="c2">Testseite</span><span class="c3">192.168.2.69</span><span class="c4">EG FSM-Support</span><span class="c5">A4 210 x 297 mm</span><span class="r c6">1</span><span class="r c7">0</span><span class="r c8">0</span><span class="r c9">0</span><span class="r c10">€ 0,00 H</span><span class="r c11">€ 0,10 S</span></div>
<div class="row" style="top:459px"><span class="c1">23.04.2015 11:57</span><span class="c2">Testseite</span><span class="c3">192.168.2.69</span><span class="c4">EG FSM-Support</span><span class="c5">A4 210 x 297 mm</span><span class="r c6">1</span><span class="r c7">0</span><span class="r c8">0</span><span class="r c9">0</span><span class="r c10">€ 0,00 H</span><span class="r c11">€ 0,10 S</span></div>
<div class="row" style="top:479px"><span class="c1">23.04.2015 12:09</span><span class="c2">Testseite</span><span class="c3">192.168.2.69</span><span class="c4">EG FSM-Support</span><span class="c5">A4 210 x 297 mm</span><span class="r c6">1</span><span class="r c7">0</span><span class="r c8">0</span><span class="r c9">0</span><span class="r c10">€ 0,00 H</span><span class="r c11">€ 0,10 S</span></div>
<div class="row" style="top:499px"><span class="c1">23.04.2015 12:09</span><span class="c2">Testseite</span><span class="c3">192.168.2.69</span><span class="c4">EG FSM-Support</span><span class="c5">A4 210 x 297 mm</span><span class="r c6">1</span><span class="r c7">0</span><span class="r c8">0</span><span class="r c9">0</span><span class="r c10">€ 0,00 H</span><span class="r c11">€ 0,10 S</span></div>
<div class="row" style="top:519px"><span class="c1">23.04.2015 12:09</span><span class="c2">Testseite</span><span class="c3">192.168.2.69</span><span class="c4">EG FSM-Support</span><span class="c5">A4 210 x 297 mm</span><span class="r c6">1</span><span class="r c7">0</span><span class="r c8">0</span><span class="r c9">0</span><span class="r c10">€ 0,00 H</span><span class="r c11">€ 0,10 S</span></div>
<div class="row" style="top:539px"><span class="c1">23.04.2015 12:09</span><span class="c2">Testseite</span><span class="c3">192.168.2.69</span><span class="c4">EG FSM-Support</span><span class="c5">A4 210 x 297 mm</span><span class="r c6">1</span><span class="r c7">0</span><span class="r c8">0</span><span class="r c9">0</span><span class="r c10">€ 0,00 H</span><span class="r c11">€ 0,10 S</span></div>
<div class="row" style="top:559px"><span class="c1">23.04.2015 12:31</span><span class="c2">Dokument</span><span class="c3">192.168.2.69</span><span class="c4">EG FSM-Support</span><span class="c5">A4 210 x 297 mm</span><span class="r c6">1</span><span class="r c7">0</span><span class="r c8">0</span><span class="r c9">0</span><span class="r c10">€ 0,00 H</span><span class="r c11">€ 0,10 S</span></div>
<div class="row" style="top:579px"><span class="c1">23.04.2015 12:32</span><span class="c2">Dokument</span><span class="c3">192.168.2.69</span><span class="c4">EG FSM-Support</span><span class="c5">A4 210 x 297 mm</span><span class="r c6">10</span><span class="r c7">0</span><span class="r c8">0</span><span class="r c9">0</span><span class="r c10">€ 0,00 H</span><span class="r c11">€ 0,55 S</span></div>
<div class="row" style="top:599px"><span class="c1">23.04.2015 12:37</span><span class="c2">Dokument</span><span class="c3">192.168.2.69</span><span class="c4">EG FSM-Support</span><span class="c5">A4 210 x 297 mm</span><span class="r c6">10</span><span class="r c7">0</span><span class="r c8">0</span><span class="r c9">0</span><span class="r c10">€ 0,00 H</span><span class="r c11">€ 0,55 S</span></div>
<div class="row" style="top:619px"><span class="c1">23.04.2015 13:55</span><span class="c2">Dokument</span><span class="c3">192.168.2.69</span><span class="c4">EG FSM-Support</span><span class="c5">A4 210 x 297 mm</span><span class="r c6">1</span><span class="r c7">0</span><span class="r c8">0</span><span class="r c9">0</span><span class="r c10">€ 0,00 H</span><span class="r c11">€ 0,10 S</span></div>
<div class="row" style="top:639px"><span class="c1">23.04.2015 13:57</span><span class="c2">Dokument</span><span class="c3">192.168.2.69</span><span class="c4">EG FSM-Support</span><span class="c5">A4 210 x 297 mm</span><span class="r c6">1</span><span class="r c7">0</span><span class="r c8">0</span><span class="r c9">0</span><span class="r c10">€ 0,00 H</span><span class="r c11">€ 0,10 S</span></div>
<div class="row" style="top:659px"><span class="c1">23.04.2015 13:57</span><span class="c2">Dokument</span><span class="c3">192.168.2.69</span><span class="c4">EG FSM-Support</span><span class="c5">A4 210 x 297 mm</span><span class="r c6">1</span><span class="r c7">0</span><span class="r c8">0</span><span class="r c9">0</span><span class="r c10">€ 0,00 H</span><span class="r c11">€ 0,10 S</span></div>
<div class="row" style="top:679px"><span class="c1">23.04.2015 13:58</span><span class="c2">Dokument</span><span class="c3">192.168.2.69</span><span class="c4">EG FSM-Support</span><span class="c5">A4 210 x 297 mm</span><span class="r c6">1</span><span class="r c7">0</span><span class="r c8">0</span><span class="r c9">0</span><span class="r c10">€ 0,00 H</span><span class="r c11">€ 0,10 S</span></div>
<div id="pscroll" class="abs">
 <div class="abs" style="left:1px;top:34px;width:15px;height:557px;background:#c9c9c9"></div>
 <svg class="abs" style="left:1.650px;top:16.500px" width="14" height="10" viewBox="0 0 14 10"><path d="M1.6 8.200 L7 2.8 L12.4 8.200" fill="none" stroke="#555" stroke-width="2.900"/></svg>
 <svg class="abs" style="left:1.650px;top:667.500px" width="14" height="10" viewBox="0 0 14 10"><path d="M1.6 1.800 L7 7.200 L12.4 1.800" fill="none" stroke="#555" stroke-width="2.900"/></svg>
</div>
</div>
<div id="tip" class="abs ui">http://www.docuform.de/</div>
<div id="taskbar" class="abs">
 <div class="abs" style="left:0;top:0;width:1680px;height:8px;background:linear-gradient(#6e83a1,#8497b3)"></div>
 <div class="abs" style="left:12px;top:2px;width:28px;height:20px;border-radius:50%;background:#8aa0bd;border:1px solid #c9d6e6"></div>
 <div class="abs tbi" style="left:60px;width:157px"></div>
 <svg class="abs" style="left:68px;top:2px" width="24" height="6" viewBox="0 0 24 6"><path d="M2 6 L3.500 1.500 C6 .8 10 .5 13 1.200 L20 2.500 L21 6 Z" fill="#ece3a4" opacity=".9"/></svg>
 <div class="abs tbi" style="left:283px;width:159px"></div>
 <div class="abs tbi" style="left:443px;width:159px"></div>
 <svg class="abs" style="left:302px;top:2px" width="24" height="6" viewBox="0 0 24 6"><path d="M2 6 C4 3.500 7 2.200 10 2.200 C12 2.200 13.500 2.800 14.500 3.600 L12 6 Z" fill="#4aa3e8"/><path d="M8 3.500 C10.500 1.200 15 .2 18.500 .8 C20.500 1.200 21 2.500 20.500 4 C19.500 2.600 17 2.400 14.500 3 C12 3.600 10 4.600 8.500 6 H6 C6.500 5 7 4.300 8 3.500 Z" fill="#f0c52e"/></svg>
 <svg class="abs" style="left:462px;top:2px" width="24" height="6" viewBox="0 0 24 6"><path d="M2 6 C4 3.500 7 2.200 10 2.200 C12 2.200 13.500 2.800 14.500 3.600 L12 6 Z" fill="#4aa3e8"/><path d="M8 3.500 C10.500 1.200 15 .2 18.500 .8 C20.500 1.200 21 2.500 20.500 4 C19.500 2.600 17 2.400 14.500 3 C12 3.600 10 4.600 8.500 6 H6 C6.500 5 7 4.300 8 3.500 Z" fill="#f0c52e"/></svg>
 <div class="abs" style="left:1665px;top:1px;width:14px;height:7px;border:1px solid #5c6b80;border-right:none;background:#9aabc2"></div>
</div>
</body>
</html>
